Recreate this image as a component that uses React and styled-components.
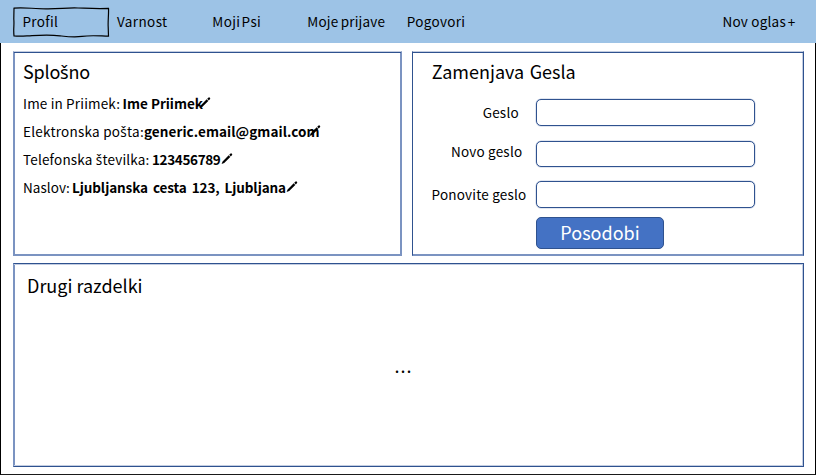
import React from 'react';
import styled, { createGlobalStyle } from 'styled-components';

const GlobalStyle = createGlobalStyle`
  * { box-sizing: border-box; }
  body { margin: 0; background: #fff; overflow: hidden; }
`;

const LINE = '#2f528f';
const MID = '#7b93c1';
const SOFT = '#c3cde1';

const Window = styled.div`
  width: 816px;
  height: 475px;
  display: flex;
  flex-direction: column;
  background: #fff;
  color: #000;
  font-family: "Noto Sans CJK SC", "Noto Sans", sans-serif;
  font-size: 13.5px;
  white-space: nowrap;
`;

const Text = styled.span`
  letter-spacing: ${(p) => p.$ls || 0}px;
  word-spacing: ${(p) => p.$ws || 0}px;
`;

const Accented = styled.span`
  font-family: "Noto Sans", sans-serif;
  line-height: 1;
`;

const NavBar = styled.nav`
  flex: none;
  height: 43px;
  display: flex;
  align-items: flex-start;
  background: #9dc3e6;
  padding: 7px 0 0 12px;
`;

const NavItem = styled.a`
  position: relative;
  width: ${(p) => p.$w}px;
  padding-left: ${(p) => p.$pad || 0}px;
  line-height: 28px;
`;

const NavAction = styled(NavItem)`
  margin-left: auto;
`;

const SketchFrame = styled.svg`
  position: absolute;
  left: 0;
  top: 0;
`;

const Main = styled.main`
  flex: 1;
  display: grid;
  grid-template-columns: 389px 392px;
  grid-template-rows: 205px 204px;
  column-gap: 10px;
  row-gap: 7px;
  padding: 8px 0 0 12px;
  border: 1px solid #000;
  border-top: 0;
  border-bottom-color: #1a1a1a;
`;

const Card = styled.section`
  border-style: solid;
  border-width: 1px;
  border-color: ${(p) => p.$outer};
  box-shadow:
    inset 0 1px ${(p) => p.$inner[0]},
    inset 0 -1px ${(p) => p.$inner[2]},
    inset 1px 0 ${(p) => p.$inner[3]},
    inset -1px 0 ${(p) => p.$inner[1]};
  padding: ${(p) => p.$pad};
  grid-column: ${(p) => p.$span || 'auto'};
`;

const Title = styled.h2`
  margin: 0;
  height: 26px;
  padding-left: ${(p) => p.$pad || 0}px;
  font-size: 18px;
  font-weight: 400;
  line-height: 26px;
  letter-spacing: ${(p) => p.$ls || 0}px;
  word-spacing: ${(p) => p.$ws || 0}px;
`;

const Details = styled.div`
  margin-top: 5px;
`;

const DetailRow = styled.div`
  display: flex;
  height: 28px;
  line-height: 28px;
`;

const DetailLabel = styled(Text)`
  width: ${(p) => p.$w}px;
`;

const DetailValue = styled(Text)`
  width: ${(p) => p.$w}px;
  font-weight: 700;
`;

const PencilSvg = styled.svg`
  flex: none;
  margin-top: 7px;
`;

const Form = styled.form`
  display: flex;
  flex-direction: column;
  align-items: flex-start;
`;

const Field = styled.label`
  display: flex;
  height: ${(p) => p.$h}px;
  margin-top: ${(p) => p.$gap}px;
`;

const FieldLabel = styled(Text)`
  width: 105px;
  padding-left: ${(p) => p.$pad}px;
  line-height: 28px;
  margin-top: ${(p) => p.$shift}px;
`;

const Input = styled.input`
  width: 219px;
  height: 100%;
  margin: 0;
  padding: 0 6px;
  border: 1px solid ${LINE};
  border-radius: 5px;
  background: #fff;
  box-shadow: 0 0 0 0.5px ${SOFT};
  outline: none;
`;

const Submit = styled.button`
  width: 128px;
  height: 32px;
  margin: 9px 0 0 105px;
  padding: 0 0 2px 0;
  border: 1px solid ${LINE};
  border-radius: 5px;
  background: #4472c4;
  color: #fff;
  font: 400 18px/28px "Noto Sans CJK SC", "Noto Sans", sans-serif;
`;

const Ellipsis = styled.div`
  margin-top: 54px;
  padding-left: 367.5px;
  font-size: 18px;
  line-height: 26px;
  letter-spacing: 1px;
`;

/* The main face has no precomposed š, so that letter is set in its companion face. */
function accent(text) {
  return text.split(/(š)/).map((part, i) => (part === 'š' ? <Accented key={i}>{part}</Accented> : part));
}

function Pencil() {
  return (
    <PencilSvg width="12" height="13" viewBox="0 0 12 13" aria-hidden="true">
      <path d="M.6 12 L1.6 9.4 L7.7 3.3 L9.3 4.9 L3.2 11 Z M8.2 2.8 L9.6 1.4 Q10.1 1 10.6 1.5 L11 1.9 Q11.5 2.4 11.1 2.9 L9.8 4.4 Z" fill="#000" />
    </PencilSvg>
  );
}

const details = [
  { label: 'Ime in Priimek:', w: 99.5, ls: 0.17, value: 'Ime Priimek', vw: 76.5, vls: 0 },
  { label: 'Elektronska pošta:', w: 121, ls: 0.25, value: 'generic.email@gmail.com', vw: 165, vls: 0.07 },
  { label: 'Telefonska številka:', w: 129, ls: 0.18, value: '123456789', vw: 68.5, vls: -0.36 },
  { label: 'Naslov:', w: 49, ls: 0.05, value: 'Ljubljanska cesta 123, Ljubljana', vw: 213.5, vls: -0.1, vws: 2 },
];

const fields = [
  { label: 'Geslo', ls: 0.2, pad: 51.7, gap: 15, h: 27, shift: -1 },
  { label: 'Novo geslo', ls: 0.2, pad: 20, gap: 15, h: 26, shift: -4 },
  { label: 'Ponovite geslo', ls: 0.2, pad: 0.5, gap: 14, h: 27, shift: -1 },
];

export default function App() {
  return (
    <Window>
      <GlobalStyle />
      <NavBar>
        <NavItem $w={105} $pad={10.5}>
          <SketchFrame width="98" height="32" viewBox="0 0 98 32" fill="none" stroke="#000" strokeWidth="1.2">
            <path d="M2 1.2 C10 .2 20 1.6 34 1.8 S54 .6 66 1 S84 1.8 96.5 1.4 C96.8 8 95.8 14 96.2 20 L96.5 29.2 C84 28.8 78 28.2 70 29.4 S58 30 48 28.8 S30 28 20 28.6 S8 29.6 2 28.9 C1.2 22 2.4 18 1.8 12 Z" />
          </SketchFrame>
          <Text $ls={0.3}>Profil</Text>
        </NavItem>
        <NavItem $w={95.3}><Text $ls={0.4}>Varnost</Text></NavItem>
        <NavItem $w={95}><Text $ls={0.4} $ws={-2.3}>Moji Psi</Text></NavItem>
        <NavItem $w={99.5}><Text $ls={0.2} $ws={-1}>Moje prijave</Text></NavItem>
        <NavItem $w={80}><Text $ls={0.3}>Pogovori</Text></NavItem>
        <NavAction $w={93.5}>
          <Text $ls={0.22}>Nov oglas</Text>
          <Text $ws={-1.2}> +</Text>
        </NavAction>
      </NavBar>
      <Main>
        <Card $outer={`${SOFT} ${MID} ${MID} ${MID}`} $inner={[LINE, MID, MID, MID]} $pad="6px 0 0 9px">
          <Title $ls={-0.2}>{accent('Splošno')}</Title>
          <Details>
            {details.map((d) => (
              <DetailRow key={d.label}>
                <DetailLabel $w={d.w} $ls={d.ls}>{accent(d.label)}</DetailLabel>
                <DetailValue $w={d.vw} $ls={d.vls} $ws={d.vws}>{d.value}</DetailValue>
                <Pencil />
              </DetailRow>
            ))}
          </Details>
        </Card>
        <Card $outer={`${SOFT} ${LINE} ${MID} ${LINE}`} $inner={[LINE, SOFT, MID, '#fff']} $pad="6px 0 0 18px">
          <Title $ws={1.5} $pad={0.7}>Zamenjava Gesla</Title>
          <Form onSubmit={(e) => e.preventDefault()}>
            {fields.map((f) => (
              <Field key={f.label} $h={f.h} $gap={f.gap}>
                <FieldLabel $ls={f.ls} $pad={f.pad} $shift={f.shift}>{f.label}</FieldLabel>
                <Input type="password" />
              </Field>
            ))}
            <Submit>Posodobi</Submit>
          </Form>
        </Card>
        <Card $span="1 / 3" $outer={`${LINE} ${LINE} ${LINE} ${MID}`} $inner={[SOFT, SOFT, SOFT, MID]} $pad="8px 0 0 13px">
          <Title>Drugi razdelki</Title>
          <Ellipsis>...</Ellipsis>
        </Card>
      </Main>
    </Window>
  );
}
